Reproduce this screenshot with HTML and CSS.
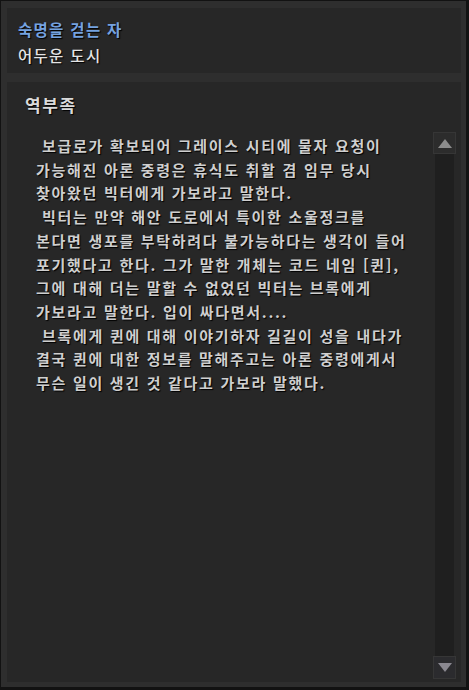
FILE: index.html
```html
<!DOCTYPE html>
<html lang="ko">
<head>
<meta charset="utf-8">
<link rel="stylesheet" href="styles.css">
</head>
<body>
<div class="frame">
  <div class="header">
    <div class="title">숙명을 걷는 자</div>
    <div class="subtitle">어두운 도시</div>
  </div>
  <div class="panel">
    <div class="heading">역부족</div>
    <div class="textbox">
      <div class="text">
        <p>보급로가 확보되어 그레이스 시티에 물자 요청이<br>가능해진 아론 중령은 휴식도 취할 겸 임무 당시<br>찾아왔던 빅터에게 가보라고 말한다.</p>
        <p>빅터는 만약 해안 도로에서 특이한 소울정크를<br>본다면 생포를 부탁하려다 불가능하다는 생각이 들어<br>포기했다고 한다. 그가 말한 개체는 코드 네임 [퀸],<br>그에 대해 더는 말할 수 없었던 빅터는 브록에게<br>가보라고 말한다. 입이 싸다면서....</p>
        <p>브록에게 퀸에 대해 이야기하자 길길이 성을 내다가<br>결국 퀸에 대한 정보를 말해주고는 아론 중령에게서<br>무슨 일이 생긴 것 같다고 가보라 말했다.</p>
      </div>
      <div class="scrollbar">
        <div class="sb-btn sb-up"><svg width="14" height="9" viewBox="0 0 14 9"><polygon points="7,0 14,9 0,9" fill="#8c8c8c"/></svg></div>
        <div class="sb-track"></div>
        <div class="sb-btn sb-down"><svg width="14" height="9" viewBox="0 0 14 9"><polygon points="0,0 14,0 7,9" fill="#8a8890"/></svg></div>
      </div>
    </div>
  </div>
</div>
</body>
</html>
```

FILE: styles.css
```css
html, body {
  margin: 0;
  padding: 0;
  background: #121212;
}
body {
  width: 469px;
  height: 690px;
  overflow: hidden;
  font-family: "Noto Sans CJK KR", "Noto Sans", sans-serif;
}
.frame {
  box-sizing: border-box;
  margin: 1px 3px 3px 1px;
  width: 465px;
  height: 686px;
  background: #2e2e2e;
  padding: 7px 5px 5px 6px;
  display: flex;
  flex-direction: column;
  gap: 9px;
}
.header {
  box-sizing: border-box;
  height: 65px;
  background: #272727;
  padding: 11px 0 0 11px;
  display: flex;
  flex-direction: column;
  gap: 5px;
}
.title {
  font-size: 15.5px;
  line-height: 21px;
  font-weight: 700;
  letter-spacing: 1.3px;
  color: #75a2e0;
  text-shadow: 1px 1px 1px #000;
}
.subtitle {
  font-size: 15.5px;
  line-height: 21px;
  font-weight: 500;
  letter-spacing: 1.3px;
  color: #e4e4e4;
  text-shadow: 1px 1px 1px #000;
}
.panel {
  flex: 1;
  min-height: 0;
  background: #272727;
  display: flex;
  flex-direction: column;
  padding: 0 5px 3px 0;
}
.heading {
  padding: 11px 0 0 18px;
  height: 38px;
  box-sizing: border-box;
  font-size: 17px;
  line-height: 23px;
  font-weight: 700;
  letter-spacing: 1.6px;
  color: #dadada;
  text-shadow: 1px 1px 1px #000;
}
.textbox {
  flex: 1;
  min-height: 0;
  display: flex;
  margin-top: 12px;
}
.text {
  flex: 1;
  padding: 2px 0 0 29px;
  font-size: 15px;
  line-height: 23.7px;
  font-weight: 700;
  letter-spacing: 1.7px;
  color: #cfcfcf;
  text-shadow: 1px 1px 1px #000;
  white-space: nowrap;
}
.text p {
  margin: 0;
  text-indent: 6px;
}
.scrollbar {
  width: 23px;
  display: flex;
  flex-direction: column;
}
.sb-btn {
  box-sizing: border-box;
  height: 22px;
  background: #2c2c2c;
  border: 1px solid #363636;
  display: flex;
  align-items: center;
  justify-content: center;
}
.sb-down {
  height: 23px;
  background: #2b2b2e;
}
.sb-track {
  flex: 1;
  margin: 0 2px 0 2px;
  background: #1f1f1f;
}
```
